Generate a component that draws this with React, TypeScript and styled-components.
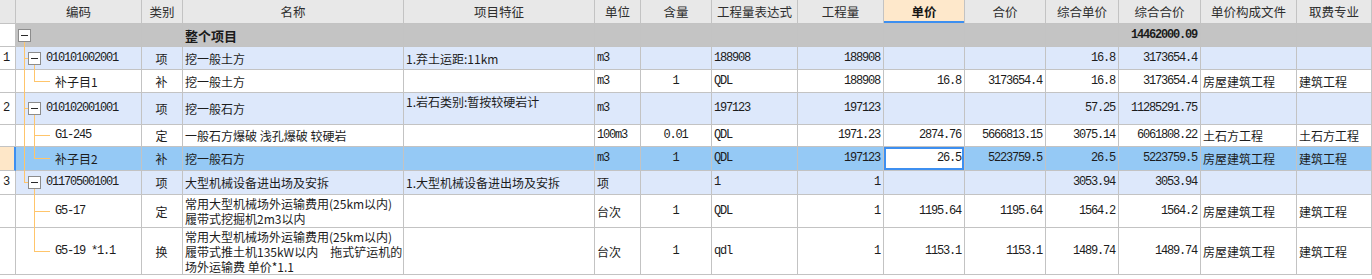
import React from 'react';
import styled, { createGlobalStyle, css } from 'styled-components';

const GlobalStyle = createGlobalStyle`
  html, body {
    margin: 0;
    padding: 0;
    background: #ffffff;
  }
  body {
    width: 1372px;
    height: 279px;
    overflow: hidden;
    font-family: "Noto Sans CJK SC", "Noto Sans", sans-serif;
  }
`;

const COLS =
  '16px 126px 41px 221px 191px 46px 71px 86px 86px 81px 81px 73px 82px 96px 1fr';

const LINE = '#c3c3c3';
const ACCENT = '#3d8ff0';

type Variant = 'total' | 'item' | 'plain' | 'selected';
type Align = 'left' | 'center' | 'right';

const rowBg: Record<Variant, string> = {
  total: '#c4c4c4',
  item: '#dde8fb',
  plain: '#ffffff',
  selected: '#95c9f5',
};

const Sheet = styled.div`
  width: 1372px;
  overflow: hidden;
  color: #1c1c1c;
  font-size: 12px;
`;

const HeaderRow = styled.div`
  display: grid;
  grid-template-columns: ${COLS};
  height: 24px;
  background: #e8e8e8;
`;

const HeadCell = styled.div<{ $active?: boolean }>`
  display: flex;
  align-items: center;
  justify-content: center;
  border-right: 1px solid ${LINE};
  border-bottom: 1px solid ${LINE};
  color: #2e2e2e;
  font-size: 12.5px;
  white-space: nowrap;
  overflow: hidden;
  ${(p) =>
    p.$active &&
    css`
      background: #fee8cb;
      color: #151515;
      font-weight: bold;
      box-shadow: inset 0 -2px 0 ${ACCENT};
    `}
`;

const Body = styled.div`
  position: relative;
`;

const Row = styled.div<{ $h: number; $variant: Variant }>`
  display: grid;
  grid-template-columns: ${COLS};
  height: ${(p) => p.$h}px;
  background: ${(p) => rowBg[p.$variant]};
`;

const Cell = styled.div<{
  $align?: Align;
  $top?: boolean;
  $mono?: boolean;
  $bold?: boolean;
}>`
  display: flex;
  align-items: ${(p) => (p.$top ? 'flex-start' : 'center')};
  justify-content: ${(p) =>
    p.$align === 'right' ? 'flex-end' : p.$align === 'center' ? 'center' : 'flex-start'};
  padding: ${(p) => (p.$top ? '1px 3px 0 2px' : '0 3px 0 2px')};
  border-right: 1px solid ${LINE};
  border-bottom: 1px solid ${LINE};
  overflow: hidden;
  white-space: pre;
  line-height: 15px;
  font-weight: ${(p) => (p.$bold ? 'bold' : 'normal')};
  ${(p) =>
    p.$mono &&
    css`
      font-family: "Liberation Mono", "Noto Sans CJK SC", monospace;
      font-size: 12px;
      letter-spacing: -1.2px;
    `}
`;

const NumCell = styled(Cell)<{ $selected?: boolean }>`
  padding-left: 3px;
  background: ${(p) => (p.$selected ? '#fee7c8' : '#ffffff')};
  ${(p) =>
    p.$selected &&
    css`
      border-right: 2px solid ${ACCENT};
    `}
`;

const EditCell = styled(Cell)`
  background: #ffffff;
  box-shadow: inset 0 0 0 2px ${ACCENT};
`;

const CodeCell = styled(Cell)<{ $level: number }>`
  padding-left: ${(p) => (p.$level === 0 ? 2 : p.$level === 1 ? 12 : 39)}px;
  gap: 5px;
`;

const Toggle = styled.span`
  position: relative;
  z-index: 2;
  flex: none;
  width: 13px;
  height: 13px;
  box-sizing: border-box;
  border: 1px solid #8c8c8c;
  background: #ffffff;
  display: flex;
  align-items: center;
  justify-content: center;

  &::after {
    content: '';
    width: 7px;
    height: 1px;
    background: #2a2a2a;
  }
`;

const Title = styled.span`
  font-size: 13px;
  font-weight: bold;
  color: #1a1a1a;
`;

const TreeLines = styled.svg`
  position: absolute;
  left: 0;
  top: 0;
  z-index: 1;
  pointer-events: none;
`;

interface Item {
  num?: string;
  code: string;
  level: number;
  box?: boolean;
  kind?: string;
  name: string;
  feature?: string;
  unit?: string;
  content?: string;
  expr?: string;
  qty?: string;
  price?: string;
  total?: string;
  zhdj?: string;
  zhhj?: string;
  file?: string;
  major?: string;
  variant: Variant;
  h: number;
  featureTop?: boolean;
}

const headers = [
  '',
  '编码',
  '类别',
  '名称',
  '项目特征',
  '单位',
  '含量',
  '工程量表达式',
  '工程量',
  '单价',
  '合价',
  '综合单价',
  '综合合价',
  '单价构成文件',
  '取费专业',
];

const rows: Item[] = [
  { code: '', level: 0, box: true, name: '整个项目', zhhj: '14462000.09', variant: 'total', h: 23 },
  {
    num: '1', code: '010101002001', level: 1, box: true, kind: '项', name: '挖一般土方',
    feature: '1.弃土运距:11km', unit: 'm3', expr: '188908', qty: '188908',
    zhdj: '16.8', zhhj: '3173654.4', variant: 'item', h: 23,
  },
  {
    code: '补子目1', level: 2, kind: '补', name: '挖一般土方', unit: 'm3', content: '1',
    expr: 'QDL', qty: '188908', price: '16.8', total: '3173654.4', zhdj: '16.8',
    zhhj: '3173654.4', file: '房屋建筑工程', major: '建筑工程', variant: 'plain', h: 23,
  },
  {
    num: '2', code: '010102001001', level: 1, box: true, kind: '项', name: '挖一般石方',
    feature: '1.岩石类别:暂按较硬岩计', unit: 'm3', expr: '197123', qty: '197123',
    zhdj: '57.25', zhhj: '11285291.75', variant: 'item', h: 32, featureTop: true,
  },
  {
    code: 'G1-245', level: 2, kind: '定', name: '一般石方爆破 浅孔爆破 较硬岩', unit: '100m3',
    content: '0.01', expr: 'QDL', qty: '1971.23', price: '2874.76', total: '5666813.15',
    zhdj: '3075.14', zhhj: '6061808.22', file: '土石方工程', major: '土石方工程',
    variant: 'plain', h: 22,
  },
  {
    code: '补子目2', level: 2, kind: '补', name: '挖一般石方', unit: 'm3', content: '1',
    expr: 'QDL', qty: '197123', price: '26.5', total: '5223759.5', zhdj: '26.5',
    zhhj: '5223759.5', file: '房屋建筑工程', major: '建筑工程', variant: 'selected', h: 24,
  },
  {
    num: '3', code: '011705001001', level: 1, box: true, kind: '项',
    name: '大型机械设备进出场及安拆', feature: '1.大型机械设备进出场及安拆', unit: '项',
    expr: '1', qty: '1', zhdj: '3053.94', zhhj: '3053.94', variant: 'item', h: 24,
  },
  {
    code: 'G5-17', level: 2, kind: '定',
    name: '常用大型机械场外运输费用(25km以内)\n履带式挖掘机2m3以内', unit: '台次',
    content: '1', expr: 'QDL', qty: '1', price: '1195.64', total: '1195.64',
    zhdj: '1564.2', zhhj: '1564.2', file: '房屋建筑工程', major: '建筑工程',
    variant: 'plain', h: 33,
  },
  {
    code: 'G5-19 *1.1', level: 2, kind: '换',
    name: '常用大型机械场外运输费用(25km以内)\n履带式推土机135kW以内　拖式铲运机的\n场外运输费 单价*1.1',
    unit: '台次', content: '1', expr: 'qdl', qty: '1', price: '1153.1', total: '1153.1',
    zhdj: '1489.74', zhhj: '1489.74', file: '房屋建筑工程', major: '建筑工程',
    variant: 'plain', h: 47,
  },
];

const isAscii = (s = '') => /^[\x00-\x7f]*$/.test(s);

// tree connector geometry, taken from the row heights
const tops: number[] = [];
rows.forEach((r, i) => tops.push(i === 0 ? 0 : tops[i - 1] + rows[i - 1].h));
const centre = (i: number) => tops[i] + (rows[i].h - 1) / 2;
const lineY = (i: number) => Math.floor(centre(i)) + 0.5;
const boxX = [24.5, 34.5];

function buildTree() {
  const segs: { x1: number; y1: number; x2: number; y2: number }[] = [];
  rows.forEach((r, i) => {
    if (r.level > 0) {
      const px = boxX[r.level - 1];
      const endX = r.level === 1 ? 28 : 50;
      segs.push({ x1: px, y1: lineY(i), x2: endX, y2: lineY(i) });
    }
    if (r.box) {
      let last = -1;
      for (let j = i + 1; j < rows.length && rows[j].level > r.level; j++) {
        if (rows[j].level === r.level + 1) last = j;
      }
      if (last > 0) {
        const x = boxX[r.level];
        segs.push({ x1: x, y1: centre(i) + 6.5, x2: x, y2: lineY(last) + 0.5 });
      }
    }
  });
  return segs;
}

const treeSegs = buildTree();
const bodyHeight = tops[tops.length - 1] + rows[rows.length - 1].h;

const App: React.FC = () => {
  return (
    <>
      <GlobalStyle />
      <Sheet>
        <HeaderRow>
          {headers.map((h, i) => (
            <HeadCell key={i} $active={h === '单价'}>
              {h}
            </HeadCell>
          ))}
        </HeaderRow>
        <Body>
          <TreeLines width={60} height={bodyHeight}>
            {treeSegs.map((s, i) => (
              <line
                key={i}
                x1={s.x1}
                y1={s.y1}
                x2={s.x2}
                y2={s.y2}
                stroke="#ffc56b"
                strokeWidth={1}
                shapeRendering="crispEdges"
              />
            ))}
          </TreeLines>
          {rows.map((r, i) => {
            const selected = r.variant === 'selected';
            const PriceCell = selected ? EditCell : Cell;
            return (
              <Row key={i} $h={r.h} $variant={r.variant}>
                <NumCell $mono $selected={selected}>{r.num}</NumCell>
                <CodeCell $level={r.level} $mono={isAscii(r.code)}>
                  {r.box && <Toggle />}
                  {r.code}
                </CodeCell>
                <Cell $align="center">{r.kind}</Cell>
                <Cell>{r.level === 0 ? <Title>{r.name}</Title> : r.name}</Cell>
                <Cell $top={r.featureTop}>{r.feature}</Cell>
                <Cell $mono={isAscii(r.unit)}>{r.unit}</Cell>
                <Cell $mono $align="center">{r.content}</Cell>
                <Cell $mono>{r.expr}</Cell>
                <Cell $mono $align="right">{r.qty}</Cell>
                <PriceCell $mono $align="right">{r.price}</PriceCell>
                <Cell $mono $align="right">{r.total}</Cell>
                <Cell $mono $align="right">{r.zhdj}</Cell>
                <Cell $mono $align="right" $bold={r.level === 0}>
                  {r.zhhj}
                </Cell>
                <Cell>{r.file}</Cell>
                <Cell>{r.major}</Cell>
              </Row>
            );
          })}
        </Body>
      </Sheet>
    </>
  );
};

export default App;
